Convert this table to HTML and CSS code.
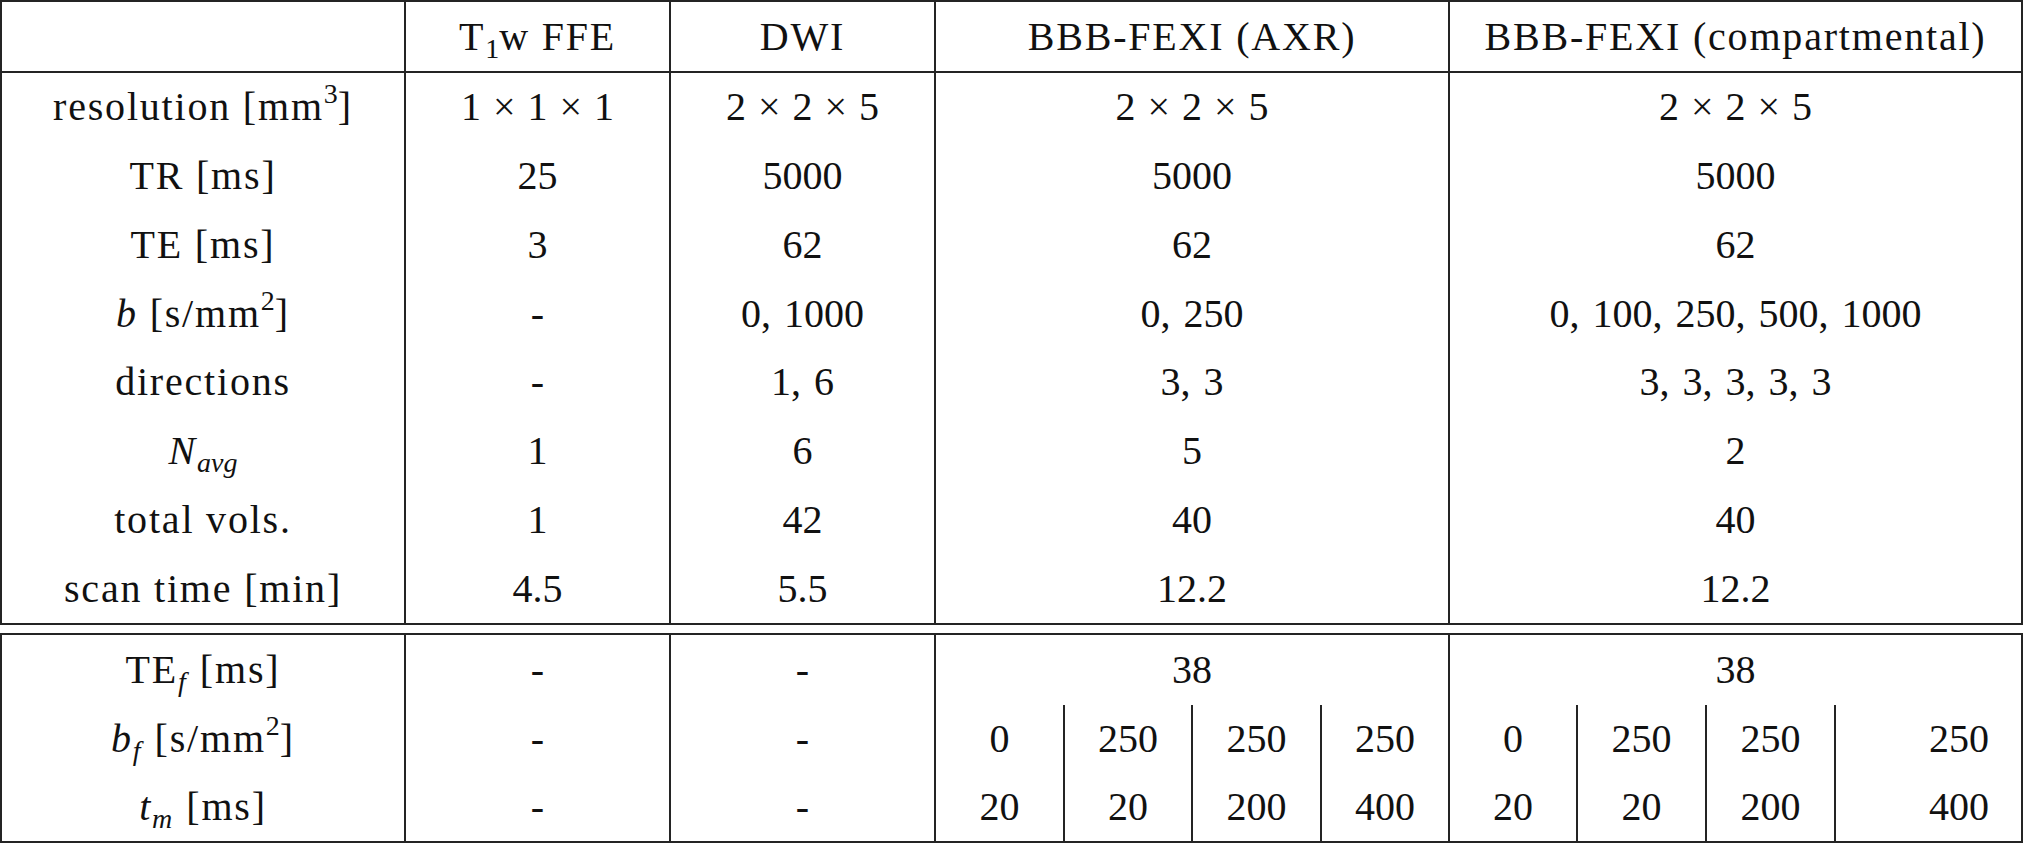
FILE: index.html
```html
<!DOCTYPE html>
<html lang="en">
<head>
<meta charset="utf-8">
<title>Acquisition parameters</title>
<link rel="stylesheet" href="styles.css">
</head>
<body>
<div class="sheet">
  <div class="tbl tbl-main">
    <div class="cell head"></div>
    <div class="cell head sep txt"><span class="in">T<sub>1</sub>w FFE</span></div>
    <div class="cell head sep txt"><span class="in">DWI</span></div>
    <div class="cell head sep txt"><span class="in">BBB-FEXI (AXR)</span></div>
    <div class="cell head sep txt"><span class="in">BBB-FEXI (compartmental)</span></div>

    <div class="cell txt"><span class="in">resolution [mm<sup>3</sup>]</span></div>
    <div class="cell sep"><span class="in">1<span class="times">×</span>1<span class="times">×</span>1</span></div>
    <div class="cell sep"><span class="in">2<span class="times">×</span>2<span class="times">×</span>5</span></div>
    <div class="cell sep"><span class="in">2<span class="times">×</span>2<span class="times">×</span>5</span></div>
    <div class="cell sep"><span class="in">2<span class="times">×</span>2<span class="times">×</span>5</span></div>

    <div class="cell txt"><span class="in">TR [ms]</span></div>
    <div class="cell sep"><span class="in">25</span></div>
    <div class="cell sep"><span class="in">5000</span></div>
    <div class="cell sep"><span class="in">5000</span></div>
    <div class="cell sep"><span class="in">5000</span></div>

    <div class="cell txt"><span class="in">TE [ms]</span></div>
    <div class="cell sep"><span class="in">3</span></div>
    <div class="cell sep"><span class="in">62</span></div>
    <div class="cell sep"><span class="in">62</span></div>
    <div class="cell sep"><span class="in">62</span></div>

    <div class="cell txt"><span class="in"><i class="var">b</i> [s/mm<sup>2</sup>]</span></div>
    <div class="cell sep"><span class="in">-</span></div>
    <div class="cell sep list"><span class="in">0, 1000</span></div>
    <div class="cell sep list"><span class="in">0, 250</span></div>
    <div class="cell sep list"><span class="in">0, 100, 250, 500, 1000</span></div>

    <div class="cell txt"><span class="in">directions</span></div>
    <div class="cell sep"><span class="in">-</span></div>
    <div class="cell sep list"><span class="in">1, 6</span></div>
    <div class="cell sep list"><span class="in">3, 3</span></div>
    <div class="cell sep list"><span class="in">3, 3, 3, 3, 3</span></div>

    <div class="cell txt"><span class="in"><i class="var">N</i><sub class="isub">avg</sub></span></div>
    <div class="cell sep"><span class="in">1</span></div>
    <div class="cell sep"><span class="in">6</span></div>
    <div class="cell sep"><span class="in">5</span></div>
    <div class="cell sep"><span class="in">2</span></div>

    <div class="cell txt"><span class="in">total vols.</span></div>
    <div class="cell sep"><span class="in">1</span></div>
    <div class="cell sep"><span class="in">42</span></div>
    <div class="cell sep"><span class="in">40</span></div>
    <div class="cell sep"><span class="in">40</span></div>

    <div class="cell txt"><span class="in">scan time [min]</span></div>
    <div class="cell sep"><span class="in">4.5</span></div>
    <div class="cell sep"><span class="in">5.5</span></div>
    <div class="cell sep"><span class="in">12.2</span></div>
    <div class="cell sep"><span class="in">12.2</span></div>
  </div>

  <div class="tbl tbl-fexi">
    <div class="cell txt"><span class="in">TE<sub class="isub">f</sub><span class="gap"></span>[ms]</span></div>
    <div class="cell sep"><span class="in">-</span></div>
    <div class="cell sep"><span class="in">-</span></div>
    <div class="cell sep span4"><span class="in">38</span></div>
    <div class="cell sep span4"><span class="in">38</span></div>

    <div class="cell txt"><span class="in"><i class="var">b</i><sub class="isub">f</sub><span class="gap"></span>[s/mm<sup>2</sup>]</span></div>
    <div class="cell sep"><span class="in">-</span></div>
    <div class="cell sep"><span class="in">-</span></div>
    <div class="cell sep"><span class="in">0</span></div>
    <div class="cell sep"><span class="in">250</span></div>
    <div class="cell sep"><span class="in">250</span></div>
    <div class="cell sep"><span class="in">250</span></div>
    <div class="cell sep"><span class="in">0</span></div>
    <div class="cell sep"><span class="in">250</span></div>
    <div class="cell sep"><span class="in">250</span></div>
    <div class="cell sep end"><span class="in">250</span></div>

    <div class="cell txt"><span class="in"><i class="var">t</i><sub class="isub">m</sub><span class="gap"></span>[ms]</span></div>
    <div class="cell sep"><span class="in">-</span></div>
    <div class="cell sep"><span class="in">-</span></div>
    <div class="cell sep"><span class="in">20</span></div>
    <div class="cell sep"><span class="in">20</span></div>
    <div class="cell sep"><span class="in">200</span></div>
    <div class="cell sep"><span class="in">400</span></div>
    <div class="cell sep"><span class="in">20</span></div>
    <div class="cell sep"><span class="in">20</span></div>
    <div class="cell sep"><span class="in">200</span></div>
    <div class="cell sep end"><span class="in">400</span></div>
  </div>
</div>
</body>
</html>
```
FILE: styles.css
```css
html, body {
  margin: 0;
  padding: 0;
  background: #ffffff;
}

body {
  font-family: "Liberation Serif", "Times New Roman", serif;
  color: #111111;
}

.sheet {
  width: 2023px;
  display: flex;
  flex-direction: column;
  gap: 8px;
}

.tbl {
  display: grid;
  border: 2px solid #242424;
}

.tbl-main {
  grid-template-columns: 402px 265px 265px 514px 573px;
  grid-template-rows: 71px repeat(8, 68.75px);
}

.tbl-fexi {
  grid-template-columns: 402px 265px 265px 129px 128px 129px 128px 128px 129px 129px 187px;
  grid-template-rows: 70px 68px 68px;
}

.cell {
  box-sizing: border-box;
  display: flex;
  align-items: center;
  justify-content: center;
  font-size: 40px;
  line-height: 1.1;
  white-space: nowrap;
}

.in {
  display: block;
}

.txt {
  letter-spacing: 1.8px;
}

.list {
  word-spacing: 3px;
}

.sep {
  border-left: 2px solid #242424;
}

.head {
  border-bottom: 2px solid #242424;
}

.span4 {
  grid-column: span 4;
}

.end {
  justify-content: flex-end;
  padding-right: 32px;
}

.times {
  margin: 0 0.3em;
}

.var {
  font-style: italic;
}

sup,
sub {
  font-size: 0.7em;
  line-height: 0;
  letter-spacing: 0;
}

sup {
  vertical-align: 0.6em;
}

sub {
  vertical-align: -0.3em;
}

.isub {
  font-style: italic;
}

.gap {
  display: inline-block;
  width: 0.35em;
}
```
